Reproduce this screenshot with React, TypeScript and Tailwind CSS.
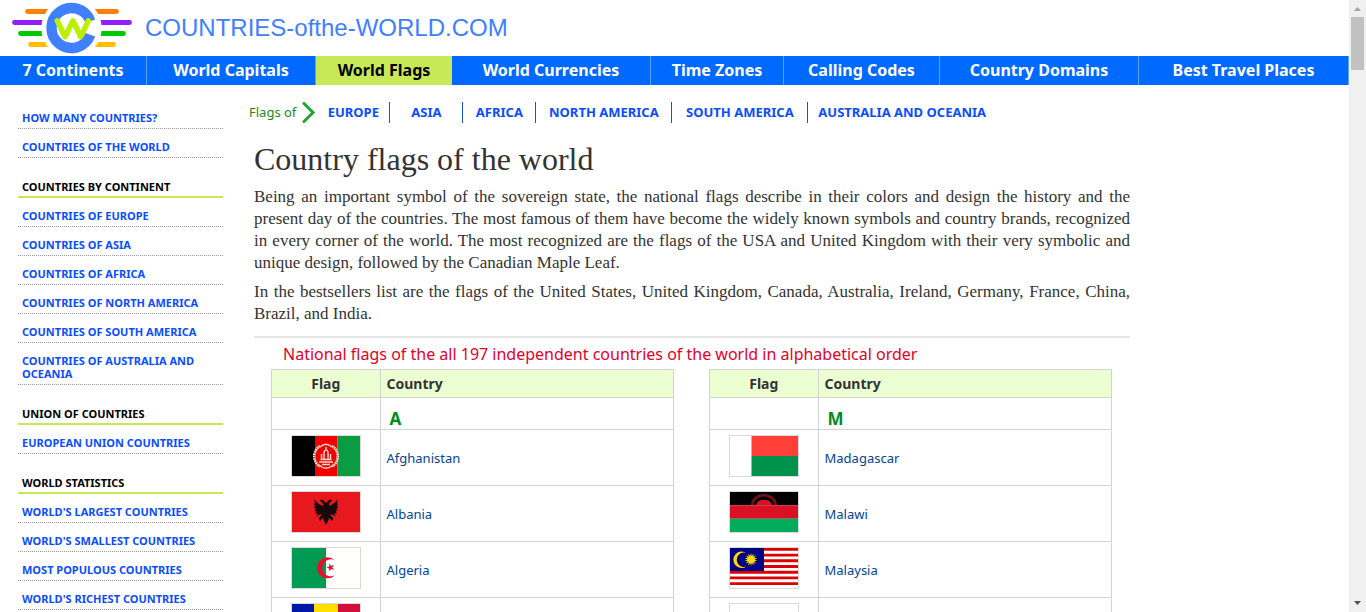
import type { ReactNode } from "react";

const navItems = [
  "7 Continents",
  "World Capitals",
  "World Flags",
  "World Currencies",
  "Time Zones",
  "Calling Codes",
  "Country Domains",
  "Best Travel Places",
];

const regions = [
  { name: "EUROPE", width: "min-w-[73px]" },
  { name: "ASIA", width: "min-w-[73px]" },
  { name: "AFRICA", width: "min-w-[73px]" },
  { name: "NORTH AMERICA", width: "min-w-[136px]" },
  { name: "SOUTH AMERICA", width: "min-w-[136px]" },
  { name: "AUSTRALIA AND OCEANIA", width: "min-w-[136px]" },
];

const sideGroups: { title?: string; links: string[] }[] = [
  { links: ["HOW MANY COUNTRIES?", "COUNTRIES OF THE WORLD"] },
  {
    title: "COUNTRIES BY CONTINENT",
    links: [
      "COUNTRIES OF EUROPE",
      "COUNTRIES OF ASIA",
      "COUNTRIES OF AFRICA",
      "COUNTRIES OF NORTH AMERICA",
      "COUNTRIES OF SOUTH AMERICA",
      "COUNTRIES OF AUSTRALIA AND OCEANIA",
    ],
  },
  { title: "UNION OF COUNTRIES", links: ["EUROPEAN UNION COUNTRIES"] },
  {
    title: "WORLD STATISTICS",
    links: [
      "WORLD'S LARGEST COUNTRIES",
      "WORLD'S SMALLEST COUNTRIES",
      "MOST POPULOUS COUNTRIES",
      "WORLD'S RICHEST COUNTRIES",
    ],
  },
];

function Logo() {
  return (
    <svg width="128" height="56" viewBox="8 0 128 56" fill="none" aria-hidden="true">
      <g strokeWidth="4.8" strokeLinecap="round">
        <path d="M27.5 11.5H50M93 11.5H116.5" stroke="#ff7f00" />
        <path d="M14.5 22.5H45M98 22.5H129.5" stroke="#8f1fff" />
        <path d="M20.5 33.5H45M98 33.5H123.500" stroke="#00c800" />
        <path d="M30.5 44.5H50M93 44.5H113.5" stroke="#ffbf00" />
      </g>
      <circle cx="71.5" cy="28" r="30.2" fill="#fff" />
      <path d="M90.3 21.2A20 20 0 1 0 90.3 34.8" stroke="#4080ff" strokeWidth="10.4" />
      <path
        d="M57.300 20.800L65 36.700L73 20.800L80.700 36.700L88.300 20.800"
        stroke="#b8f000"
        strokeWidth="5.4"
        strokeLinecap="round"
        strokeLinejoin="round"
      />
    </svg>
  );
}

function Flag({ children }: { children?: ReactNode }) {
  return (
    <svg
      aria-hidden="true"
      className="mx-auto block h-[42px] w-[70px] border border-[#d9d9d9]"
      viewBox="0 0 68 40"
    >
      {children}
    </svg>
  );
}

const sunRays = Array.from({ length: 14 }, (_, i) => {
  const a = (i * Math.PI) / 7;
  const b = a + Math.PI / 14;
  return `${21 + 6.6 * Math.sin(a)},${11.5 - 6.6 * Math.cos(a)} ${21 + 3.6 * Math.sin(b)},${11.5 - 3.6 * Math.cos(b)}`;
}).join(" ");

const left = [
  {
    name: "Afghanistan",
    art: (
      <>
        <path d="M0 0H23V40H0Z" fill="#000" />
        <path d="M23 0H45.500V40H23Z" fill="#f00000" />
        <path d="M45.500 0H68V40H45.500Z" fill="#0b9b43" />
        <g stroke="#f5d5c5" fill="none">
          <path d="M28 10A12 12 0 0 0 28 30.500M40 10A12 12 0 0 1 40 30.500" strokeWidth="2.600" strokeDasharray="1.800 .5" />
          <path d="M28 11Q34 5.500 40 11M27 29Q34 35.500 41 29" strokeWidth="1.300" />
          <path d="M27 26H41M28.500 23.500H39.500M29.500 24V18M38.500 24V18M32 24V16Q34 11.500 36 16V24M34 11V14M30 28.500H38" strokeWidth="1.500" />
        </g>
      </>
    ),
  },
  {
    name: "Albania",
    art: (
      <>
        <path d="M0 0H68V40H0Z" fill="#e8191e" />
        <path
          d="M34 11L31.500 8.500L29.500 7.300L27.500 9L29.500 9.500L31 12L30.500 14L27 12L22 7.500L23 11L22 12L23 14L22 15L23.500 17L22.500 18.500L24.500 19.500L23 21.500L26 21.500L24 24.500L28 22.500L30 22.500L26.500 26.500L28 29L30 27L31 25.500L31.500 28L34 33L36.500 28L37 25.500L38 27L40 29L41.500 26.500L38 22.500L40 22.500L44 24.500L42 21.500L45 21.500L43.500 19.500L45.500 18.500L44.500 17L46 15L45 14L46 12L45 11L46 7.500L41 12L37.500 14L37 12L38.500 9.500L40.500 9L38.500 7.300L36.500 8.500Z"
          fill="#180a0a"
        />
      </>
    ),
  },
  {
    name: "Algeria",
    art: (
      <>
        <path d="M0 0H34V40H0Z" fill="#009a53" />
        <path d="M34 0H68V40H34Z" fill="#fffffc" />
        <path d="M43 12.500A10.500 10.500 0 1 0 43 27.200A8.500 8.500 0 1 1 43 12.500Z" fill="#e8112d" />
        <path
          d="M34.200 19.500L37.200 18.600L37.200 15.500L39.100 17.900L42 16.900L40.300 19.500L42 22.100L39.100 21.100L37.200 23.500L37.200 20.400Z"
          fill="#e8112d"
        />
      </>
    ),
  },
  {
    name: "",
    art: (
      <>
        <path d="M0 0H22V40H0Z" fill="#0018a8" />
        <path d="M22 0H46V40H22Z" fill="#fedf00" />
        <path d="M46 0H68V40H46Z" fill="#d0103a" />
      </>
    ),
  },
];

const right = [
  {
    name: "Madagascar",
    art: (
      <>
        <path d="M21.500 0H68V20H21.500Z" fill="#ff3f38" />
        <path d="M21.500 20H68V40H21.500Z" fill="#00924a" />
      </>
    ),
  },
  {
    name: "Malawi",
    art: (
      <>
        <path d="M0 0H68V13.300H0Z" fill="#000" />
        <path d="M0 13.300H68V26.700H0Z" fill="#d81125" />
        <path d="M0 26.700H68V40H0Z" fill="#00ab59" />
        <path d="M26 13A8.300 7 0 0 1 42 13Z" fill="#d81125" />
        <path d="M22.300 13A11.700 9.700 0 0 1 45.700 13" fill="none" stroke="#9a1020" strokeWidth="2.600" strokeDasharray="1.500 .4" />
      </>
    ),
  },
  {
    name: "Malaysia",
    art: (
      <>
        <path d="M0 0H68V40H0Z" fill="#fff" />
        <path
          d="M0 1.400H68M0 7.100H68M0 12.800H68M0 18.500H68M0 24.200H68M0 29.900H68M0 35.600H68"
          stroke="#dc0000"
          strokeWidth="2.900"
        />
        <path d="M0 0H34V23H0Z" fill="#000082" />
        <path d="M16.500 5A8.300 8.300 0 1 0 16.500 18.500A7.200 7.200 0 1 1 16.500 5Z" fill="#ffd800" />
        <polygon points={sunRays} fill="#ffd800" />
      </>
    ),
  },
  { name: "", art: null },
];

function FlagTable({ letter, rows }: { letter: string; rows: { name: string; art: ReactNode }[] }) {
  return (
    <table className="ml-[17px] w-[92%] table-fixed border-collapse text-[14px] leading-5 text-[#333] [&_td]:border [&_td]:border-[#d3d3d3] [&_th]:border [&_th]:border-[#d3d3d3]">
      <thead>
        <tr className="h-7 bg-[#ebffd3]">
          <th className="w-[27%] font-bold">Flag</th>
          <th className="px-1.5 text-left font-bold">Country</th>
        </tr>
      </thead>
      <tbody>
        <tr className="h-8">
          <td />
          <td className="px-[9px] pt-2.5 text-[17px] font-bold text-[#008c1e]">{letter}</td>
        </tr>
        {rows.map((r, i) => (
          <tr key={i} className="h-14">
            <td className="pt-[5px] align-top">
              <Flag>{r.art}</Flag>
            </td>
            <td className="px-1.5 text-[13px]">
              {r.name && (
                <a href="#" className="text-[#004594]">
                  {r.name}
                </a>
              )}
            </td>
          </tr>
        ))}
      </tbody>
    </table>
  );
}

export default function App() {
  return (
    <div className="flex h-screen overflow-hidden bg-white font-['Noto_Sans',sans-serif]">
      <div className="min-w-0 flex-1 overflow-hidden">
        <header className="flex h-14 items-center pl-2">
          <Logo />
          <a href="#" className="ml-[9px] font-['Liberation_Sans',sans-serif] text-[24px] leading-7 text-[#4080ff]">
            COUNTRIES-ofthe-WORLD.COM
          </a>
        </header>
        <nav className="grid grid-cols-[147fr_169fr_136fr_199fr_133fr_156fr_199fr_210fr] bg-[#0069ff]">
          {navItems.map((n) => (
            <a
              key={n}
              href="#"
              className={
                n === "World Flags"
                  ? "h-[29px] bg-[#c8e957] text-center text-[16px] leading-7 font-bold whitespace-nowrap text-black"
                  : "h-[29px] border-r border-[#58a6e8] text-center text-[16px] leading-7 font-bold whitespace-nowrap text-white"
              }
            >
              {n}
            </a>
          ))}
        </nav>
        <div className="flex">
          <aside className="ml-[18px] w-[205px] shrink-0 pt-[15px] text-[11px] leading-[13px] font-bold">
            {sideGroups.map((g) => (
              <div key={g.links[0]}>
                {g.title && <h2 className="border-b-2 border-[#c8e957] px-1 pt-[22px] pb-[3px] text-black">{g.title}</h2>}
                <ul>
                  {g.links.map((l) => (
                    <li key={l} className="border-b border-dotted border-[#999] px-1 pt-[11px] pb-1">
                      <a href="#" className="text-[#0a4dff]">
                        {l}
                      </a>
                    </li>
                  ))}
                </ul>
              </div>
            ))}
          </aside>
          <main className="ml-[26px] min-w-0 flex-1 pt-[17px]">
            <div className="flex items-center text-[13px] leading-[21px]">
              <span className="text-[#1a8a1a]">Flags of</span>
              <svg width="14" height="21" viewBox="0 0 14 21" className="mr-px ml-[6px]" aria-hidden="true">
                <path d="M2 1.500L11 10.500L2 19.500" fill="none" stroke="#1ea532" strokeWidth="3" strokeLinecap="round" />
              </svg>
              {regions.map((r) => (
                <a
                  key={r.name}
                  href="#"
                  className={`${r.width} border-r border-[#1a4fd0] px-2.5 text-center font-bold whitespace-nowrap text-[#0a4dff] last:border-r-0`}
                >
                  {r.name}
                </a>
              ))}
            </div>
            <article className="ml-[5px] max-w-[876px] font-['Liberation_Serif',serif] text-[#333]">
              <h1 className="mt-[18px] text-[32px] leading-9">Country flags of the world</h1>
              <div className="mt-[9px] space-y-[7px] text-justify text-[17px] leading-[22px]">
                <p>
                  Being an important symbol of the sovereign state, the national flags describe in their colors and
                  design the history and the present day of the countries. The most famous of them have become the
                  widely known symbols and country brands, recognized in every corner of the world. The most recognized
                  are the flags of the USA and United Kingdom with their very symbolic and unique design, followed by
                  the Canadian Maple Leaf.
                </p>
                <p>
                  In the bestsellers list are the flags of the United States, United Kingdom, Canada, Australia,
                  Ireland, Germany, France, China, Brazil, and India.
                </p>
              </div>
              <hr className="mt-[11px] border-t-2 border-[#e5e5e5]" />
              <div className="font-['Noto_Sans',sans-serif]">
                <h2 className="mt-[5px] mb-1 pl-[29px] text-[16px] leading-[22px] text-[#e2002a]">
                  National flags of the all 197 independent countries of the world in alphabetical order
                </h2>
                <div className="grid grid-cols-2">
                  <FlagTable letter="A" rows={left} />
                  <FlagTable letter="M" rows={right} />
                </div>
              </div>
            </article>
          </main>
        </div>
      </div>
      <div className="flex w-[17px] shrink-0 flex-col items-center justify-between bg-[#f0f0f0]" aria-hidden="true">
        <div className="flex flex-col items-center">
          <svg width="17" height="17" viewBox="0 0 17 17">
            <path d="M5 11L8.500 7L12 11Z" fill="#a3a3a3" />
          </svg>
          <div className="h-[53px] w-[13px] bg-[#c1c1c1]" />
        </div>
        <svg width="17" height="17" viewBox="0 0 17 17">
          <path d="M5 6L8.500 10L12 6Z" fill="#505050" />
        </svg>
      </div>
    </div>
  );
}
